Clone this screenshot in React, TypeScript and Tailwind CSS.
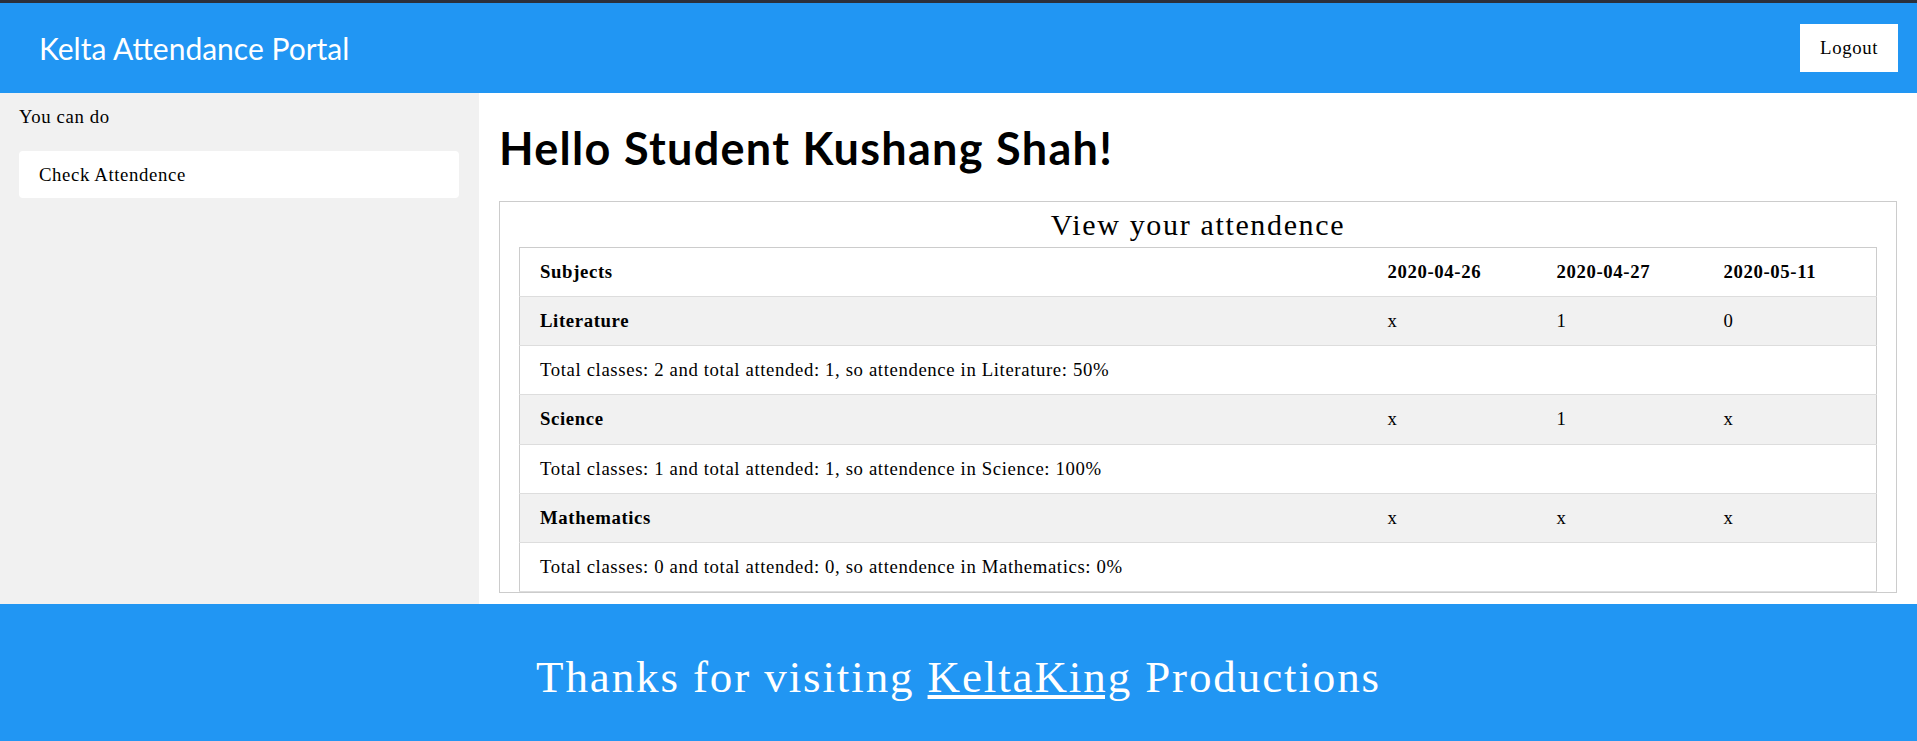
import React from "react";

const dates = ["2020-04-26", "2020-04-27", "2020-05-11"];

const subjects = [
  { name: "Literature", marks: ["x", "1", "0"], total: 2, attended: 1, percent: "50%" },
  { name: "Science", marks: ["x", "1", "x"], total: 1, attended: 1, percent: "100%" },
  { name: "Mathematics", marks: ["x", "x", "x"], total: 0, attended: 0, percent: "0%" },
];

const colWidths = ["w-[169px]", "w-[167px]", "w-[163px]"];

const App = () => {
  return (
    <div className="min-h-screen flex flex-col bg-white text-black font-['Liberation_Serif',serif] text-[18.75px] leading-[1.5] tracking-[0.033em]">
      {/* top bar */}
      <div className="border-t-[3px] border-[#2b303b] bg-[#2196F3] h-[93px] flex items-center justify-between pl-[39px] pr-[19px]">
        <span className="text-white text-[30px] font-['Lato',sans-serif] tracking-normal">Kelta Attendance Portal</span>
        <button className="bg-white text-black h-[48px] px-[20px]">Logout</button>
      </div>

      <div className="flex flex-1">
        {/* sidebar */}
        <div className="w-[479px] shrink-0 bg-[#f1f1f1] pt-[10px] px-[19px]">
          <p>You can do</p>
          <div className="mt-[20px] bg-white rounded-[4px] pl-[20px] py-[9.5px] w-[440px]">Check Attendence</div>
        </div>

        {/* main */}
        <div className="flex-1 pt-[22px] px-[20px] pb-[11px]">
          <h1 className="font-['Lato',sans-serif] font-bold text-[45px] leading-[67.5px] tracking-[1.3px] mb-[18.5px]">
            Hello Student Kushang Shah!
          </h1>
          <div className="border border-[#ccc]">
            <div className="text-center text-[30px] leading-[45px] tracking-[0.055em]">View your attendence</div>
            <div className="mx-[19px]">
              <table className="w-full border border-[#ccc] border-b-0 border-collapse">
                <thead>
                  <tr className="border-b border-[#ddd]">
                    <th className="text-left font-bold pl-[20px] pr-[10px] py-[10px]">Subjects</th>
                    {dates.map((d, i) => (
                      <th key={d} className={`text-left font-bold px-[10px] py-[10px] ${colWidths[i]}`}>
                        {d}
                      </th>
                    ))}
                  </tr>
                </thead>
                <tbody>
                  {subjects.map((s) => (
                    <React.Fragment key={s.name}>
                      <tr className="border-b border-[#ddd] bg-[#f1f1f1]">
                        <td className="font-bold pl-[20px] pr-[10px] py-[10px]">{s.name}</td>
                        {s.marks.map((m, i) => (
                          <td key={i} className="px-[10px] py-[10px]">
                            {m}
                          </td>
                        ))}
                      </tr>
                      <tr className="border-b border-[#ddd] bg-white">
                        <td colSpan={4} className="pl-[20px] pr-[10px] py-[10px]">
                          Total classes: {s.total} and total attended: {s.attended}, so attendence in {s.name}: {s.percent}
                        </td>
                      </tr>
                    </React.Fragment>
                  ))}
                </tbody>
              </table>
            </div>
          </div>
        </div>
      </div>

      {/* footer */}
      <div className="bg-[#2196F3] text-white text-center text-[45px] leading-[67.5px] tracking-[0.042em] pt-[40px] pb-[40px]">
        Thanks for visiting <a className="underline">KeltaKing</a> Productions
      </div>
    </div>
  );
};

export default App;
